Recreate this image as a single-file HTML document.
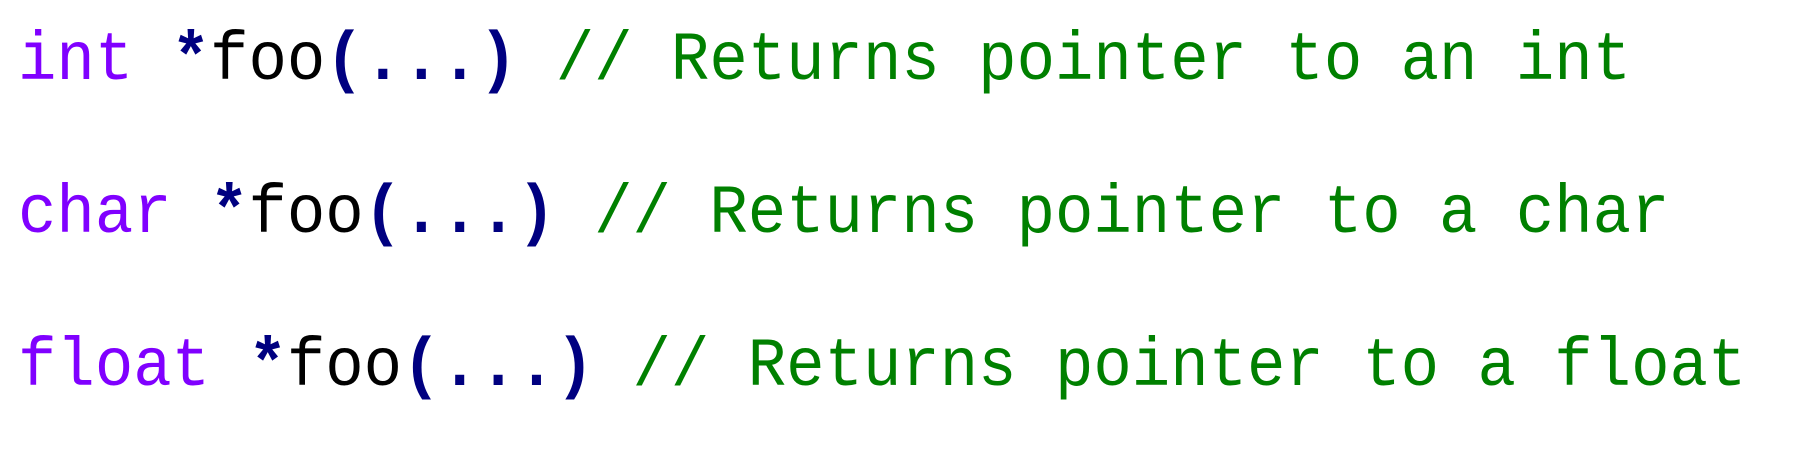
<!DOCTYPE html>
<html><head><style>
html,body{margin:0;padding:0;background:#fff;width:1796px;height:452px;overflow:hidden}
pre{margin:0;position:absolute;left:18px;top:-14px;font-family:"Liberation Mono",monospace;font-size:64px;line-height:143px;color:#000;transform:scaleY(1.07);transform-origin:0 0}
.k{color:#8000ff}.o{color:#000080;font-weight:bold}.c{color:#008000}
</style></head><body>
<pre><span class="k">int</span> <span class="o">*</span>foo<span class="o">(...)</span> <span class="c">// Returns pointer to an int</span>
<span class="k">char</span> <span class="o">*</span>foo<span class="o">(...)</span> <span class="c">// Returns pointer to a char</span>
<span class="k">float</span> <span class="o">*</span>foo<span class="o">(...)</span> <span class="c">// Returns pointer to a float</span></pre>
</body></html>
